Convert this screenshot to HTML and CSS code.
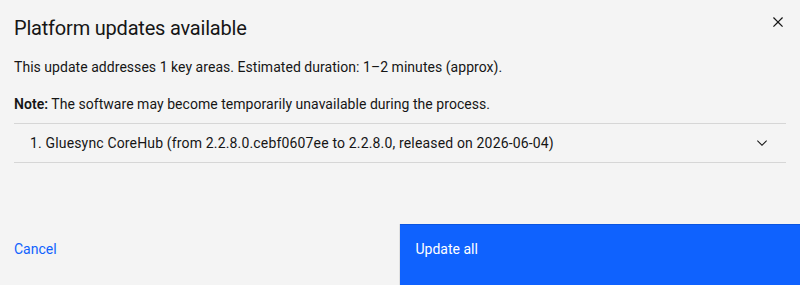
FILE: index.html
```html
<!DOCTYPE html>
<html lang="en">
<head>
<meta charset="utf-8">
<title>Platform updates available</title>
<link rel="stylesheet" href="styles.css">
</head>
<body>
<div class="modal">
  <header class="modal-header">
    <h2 class="modal-title">Platform updates available</h2>
    <button class="close-btn" aria-label="Close">
      <svg width="20" height="20" viewBox="0 0 16 16" aria-hidden="true"><path d="M12 4.7L11.3 4 8 7.3 4.7 4 4 4.7 7.3 8 4 11.3 4.7 12 8 8.7 11.3 12 12 11.3 8.7 8z"/></svg>
    </button>
  </header>
  <div class="modal-content">
    <p class="para">This update addresses 1 key areas. Estimated duration: 1–2 minutes (approx).</p>
    <p class="para note"><strong>Note:</strong> The software may become temporarily unavailable during the process.</p>
    <ul class="accordion">
      <li class="accordion-item">
        <button class="accordion-heading">
          <span class="accordion-title">1. Gluesync CoreHub (from 2.2.8.0.cebf0607ee to 2.2.8.0, released on 2026-06-04)</span>
          <svg class="chevron" width="16" height="16" viewBox="0 0 16 16" aria-hidden="true"><path d="M8 11L3 6 3.7 5.3 8 9.6 12.3 5.3 13 6z"/></svg>
        </button>
      </li>
    </ul>
  </div>
  <footer class="modal-footer">
    <button class="btn btn-ghost">Cancel</button>
    <button class="btn btn-primary">Update all</button>
  </footer>
</div>
</body>
</html>
```
FILE: styles.css
```css
* { box-sizing: border-box; }
html, body { margin: 0; padding: 0; }
body {
  background: #f4f4f4;
  font-family: Roboto, sans-serif;
  color: #161616;
  overflow: hidden;
}
.modal {
  width: 800px;
  height: 288px;
  display: flex;
  flex-direction: column;
  background: #f4f4f4;
}
.modal-header {
  position: relative;
  padding: 14px 48px 0 14px;
}
.modal-title {
  margin: 0;
  font-size: 20px;
  font-weight: 400;
  line-height: 28px;
  letter-spacing: -0.2px;
}
.close-btn {
  position: absolute;
  top: 6px;
  right: 6px;
  width: 32px;
  height: 32px;
  border: 0;
  background: transparent;
  padding: 0;
  display: flex;
  align-items: center;
  justify-content: center;
}
.close-btn svg { fill: #161616; }
.modal-content {
  padding: 15px 14px 0 14px;
  height: 182px;
}
.para {
  margin: 0 0 17px;
  font-size: 14px;
  line-height: 20px;
  letter-spacing: 0.04px;
}
.para strong { font-weight: 600; }
.note { margin-bottom: 9px; }
.accordion {
  list-style: none;
  margin: 0;
  padding: 0;
  border-top: 1px solid #d6d6d6;
  border-bottom: 1px solid #d6d6d6;
}
.accordion-heading {
  width: 100%;
  height: 38px;
  display: flex;
  align-items: center;
  justify-content: space-between;
  padding: 0 16px;
  border: 0;
  background: transparent;
  font: inherit;
  color: #161616;
  font-size: 14px;
  letter-spacing: 0.16px;
  text-align: left;
}
.chevron { fill: #161616; }
.modal-footer {
  display: flex;
  height: 64px;
  flex: none;
}
.btn {
  flex: 1;
  height: 64px;
  border: 0;
  font: inherit;
  font-size: 14px;
  line-height: 20px;
  text-align: left;
  display: flex;
  align-items: flex-start;
  padding: 15px 16px 0 14px;
}
.btn-ghost {
  background: #f4f4f4;
  color: #0f62fe;
  border-right: 1px solid #e0e0e0;
}
.btn-primary {
  background: #0f62fe;
  color: #ffffff;
  border-top: 1px solid #0b55e0;
  padding-top: 14px;
  padding-left: 16px;
}
```
